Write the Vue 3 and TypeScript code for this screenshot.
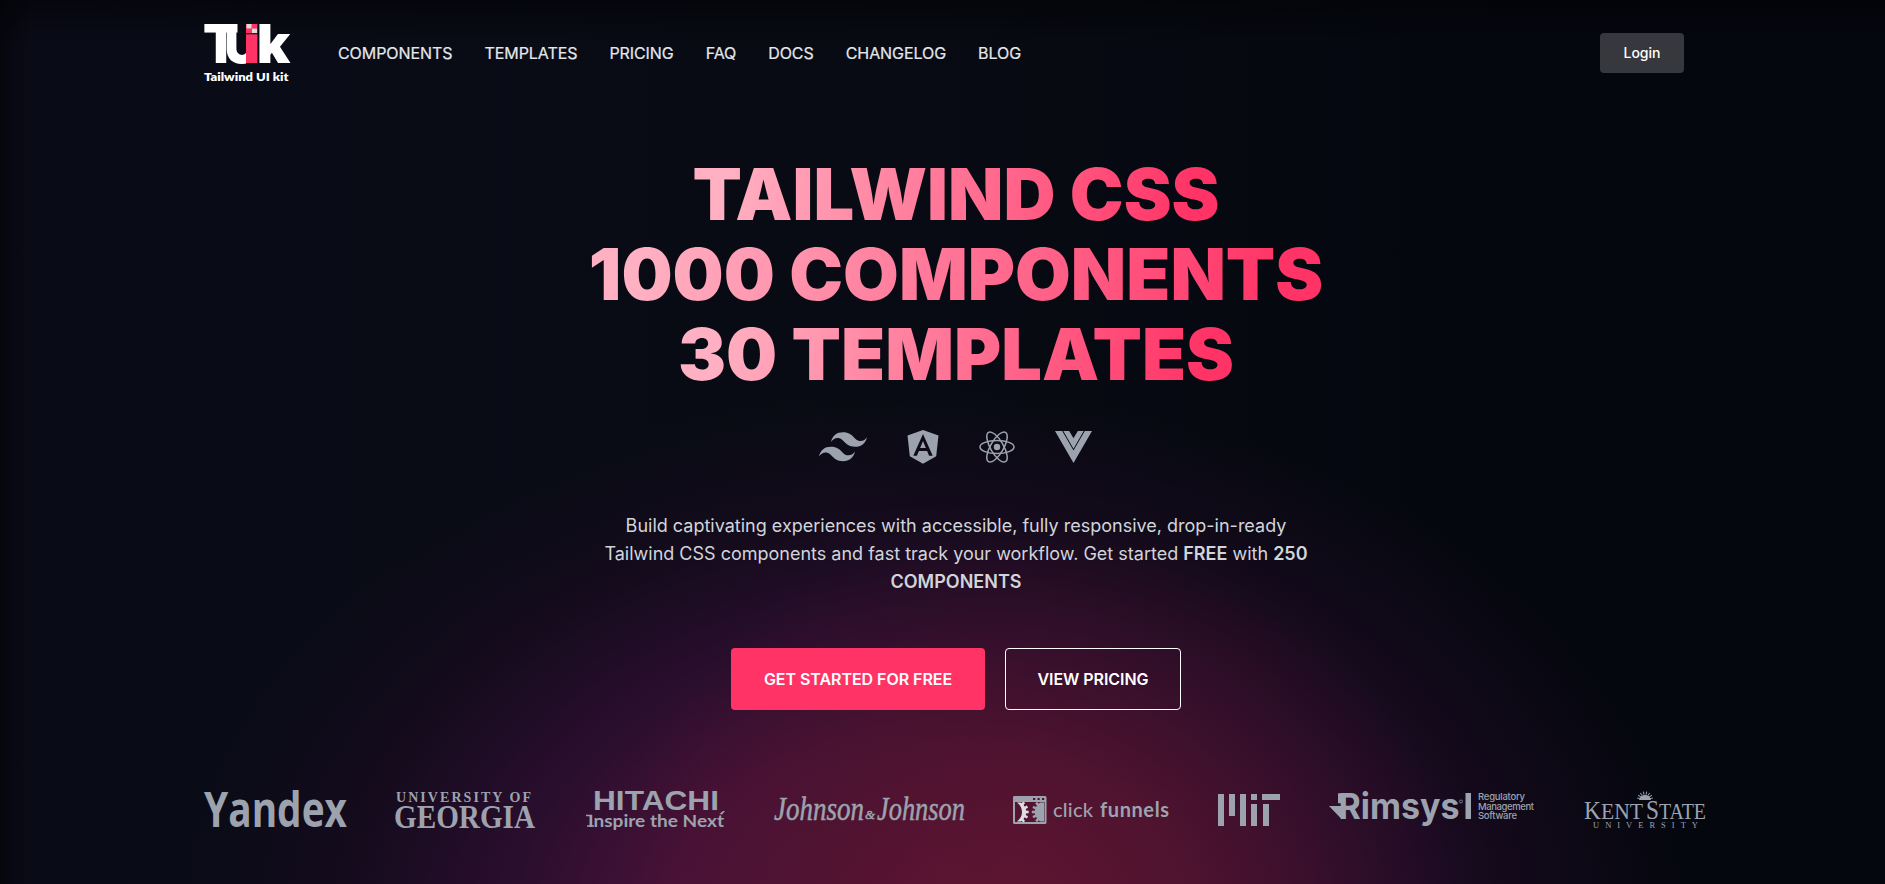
<script setup lang="ts">
const links: string[] = ['COMPONENTS', 'TEMPLATES', 'PRICING', 'FAQ', 'DOCS', 'CHANGELOG', 'BLOG']
const headline: string[] = ['TAILWIND CSS', '1000 COMPONENTS', '30 TEMPLATES']
const rays: number[] = [-80, -58, -36, -12, 12, 36, 58, 80]
const teeth: number[] = [-50, -25, 0, 25, 50]
</script>

<template>
  <div class="page">
    <header class="header">
      <svg class="logo" width="88" height="60" viewBox="0 0 88 60">
        <g class="mark" fill="#fff">
          <text x="-1" y="40" font-size="53.500" textLength="36" lengthAdjust="spacingAndGlyphs">T</text>
          <text x="20.500" y="39.500" font-size="53" textLength="35" lengthAdjust="spacingAndGlyphs">U</text>
          <text x="52.800" y="40" font-size="53.500" textLength="33.500" lengthAdjust="spacingAndGlyphs">k</text>
        </g>
        <rect x="33.800" y="0" width="8.200" height="27" fill="#080a14" />
        <rect x="42" y="0" width="13" height="41" fill="#080a14" />
        <rect x="42" y="11.300" width="11.400" height="28.700" fill="#ff3366" />
        <rect x="42" y="1" width="11.400" height="9.200" fill="#ff3366" />
        <rect x="42.500" y="1" width="5" height="4.400" fill="#ddd" />
        <rect x="48" y="5.600" width="5" height="4.400" fill="#ddd" />
        <text class="tag" x="0" y="57.500" font-size="12" fill="#fff" textLength="84.500" lengthAdjust="spacingAndGlyphs">Tailwind UI kit</text>
      </svg>
      <nav class="nav">
        <a v-for="link in links" :key="link">{{ link }}</a>
      </nav>
      <button class="login">Login</button>
    </header>

    <main class="hero">
      <h1>
        <span v-for="line in headline" :key="line" class="line">{{ line }}</span>
      </h1>

      <div class="tech">
        <svg width="48" height="30" viewBox="0 0 54 33" fill="#9ca3af">
          <path d="M27 0c-7.200 0-11.700 3.600-13.500 10.800 2.700-3.600 5.850-4.950 9.450-4.050 2.054.513 3.522 2.004 5.147 3.653C30.744 13.090 33.808 16.200 40.500 16.200c7.200 0 11.700-3.600 13.500-10.800-2.700 3.600-5.850 4.950-9.450 4.050-2.054-.513-3.522-2.004-5.147-3.653C36.756 3.110 33.692 0 27 0zM13.500 16.200C6.300 16.200 1.800 19.800 0 27c2.700-3.600 5.850-4.950 9.450-4.050 2.054.514 3.522 2.004 5.147 3.653C17.244 29.290 20.308 32.400 27 32.400c7.200 0 11.700-3.600 13.500-10.800-2.700 3.600-5.850 4.950-9.450 4.050-2.054-.513-3.522-2.004-5.147-3.653C23.256 19.310 20.192 16.200 13.500 16.200z" />
        </svg>
        <svg width="32" height="34" viewBox="0 0 32 34" fill="#9ca3af">
          <path fill-rule="evenodd" d="M16 0 31.500 5.500 29.200 26.300 16 33.700 2.800 26.300.5 5.500ZM16 4 6.300 25.800h3.600l2-4.900h8.200l2 4.900h3.600ZM16 10.900l2.900 7h-5.800Z" />
        </svg>
        <svg width="36" height="34" viewBox="0 0 36 34" fill="none" stroke="#9ca3af" stroke-width="1.500">
          <circle cx="18" cy="17" r="3.200" fill="#9ca3af" stroke="none" />
          <ellipse cx="18" cy="17" rx="17" ry="6.500" />
          <ellipse cx="18" cy="17" rx="17" ry="6.500" transform="rotate(60 18 17)" />
          <ellipse cx="18" cy="17" rx="17" ry="6.500" transform="rotate(120 18 17)" />
        </svg>
        <svg width="37" height="32" viewBox="0 0 37 32" fill="#9ca3af">
          <path d="M0 0H7.200L18.500 19.500 29.800 0H37L18.500 32Z" />
          <path d="M8.300 0H14.200L18.500 7.300 22.800 0H28.700L18.500 17.700Z" />
        </svg>
      </div>

      <p class="lead">
        Build captivating experiences with accessible, fully responsive, drop-in-ready Tailwind CSS components and fast
        track your workflow. Get started <b>FREE</b> with <b>250 COMPONENTS</b>
      </p>

      <div class="actions">
        <button class="btn primary">GET STARTED FOR FREE</button>
        <button class="btn outline">VIEW PRICING</button>
      </div>
    </main>

    <section class="brands">
      <svg width="142" height="44" viewBox="0 0 142 44">
        <text class="yandex" x="0" y="37" font-size="47.500" textLength="143" lengthAdjust="spacingAndGlyphs">Yandex</text>
      </svg>
      <svg width="143" height="44" viewBox="0 0 143 44">
        <text class="serif bold" x="2" y="11.500" font-size="14" textLength="135">UNIVERSITY OF</text>
        <text class="serif bold" x="0" y="38" font-size="33.500" textLength="141" lengthAdjust="spacingAndGlyphs">GEORGIA</text>
      </svg>
      <svg width="140" height="44" viewBox="0 0 140 44">
        <text class="sans bold" x="7" y="19.500" font-size="28" textLength="126" lengthAdjust="spacingAndGlyphs">HITACHI</text>
        <text class="lato bold" x="2" y="36.500" font-size="17" textLength="136" lengthAdjust="spacingAndGlyphs">Inspire the Next</text>
        <path d="M0 24.700h6v1.500H0zM1 35.300h7v1.400H1zM133.500 24l3.500-3h2l-3 3.500z" />
      </svg>
      <svg width="191" height="44" viewBox="0 0 191 44">
        <text class="script" x="0" y="30" font-size="34" textLength="90" lengthAdjust="spacingAndGlyphs">Johnson</text>
        <text class="script" x="91" y="29" font-size="13" textLength="10" lengthAdjust="spacingAndGlyphs">&amp;</text>
        <text class="script" x="103" y="30" font-size="34" textLength="88" lengthAdjust="spacingAndGlyphs">Johnson</text>
      </svg>
      <svg width="157" height="44" viewBox="0 0 157 44">
        <path fill-rule="evenodd" d="M1 6h31q1.500 0 1.500 1.500v25q0 1.500-1.500 1.500H1.500Q0 34 0 32.500V7.500Q0 6 1 6ZM2 12v20h29.500V12Z" />
        <path fill="#dcdde3" d="M4 12.500h4q4.500 3 5.500 9.500-1 6-5.500 9.500H4q5-4 5-9.500T4 12.500Z" />
        <path d="M31 12.500h-4q-4.500 3-5.500 9.500 1 6 5.500 9.500h4z" />
        <g fill="#dcdde3">
          <rect v-for="a in teeth" :key="a" x="12.500" y="20.700" width="3.200" height="2.600" :transform="`rotate(${a} 3 22)`" />
        </g>
        <rect v-for="a in teeth" :key="`r${a}`" x="18.800" y="20.700" width="3.500" height="2.600" :transform="`rotate(${a} 31 22)`" />
        <path fill="#4c1431" d="M20 8h2.200v2H20zM24.500 8h2.200v2h-2.200zM29 8h2.200v2H29z" />
        <text class="lato" x="40" y="26.500" font-size="20" font-weight="500" textLength="40">click</text>
        <text class="lato" x="87" y="26.500" font-size="20" font-weight="700" textLength="69">funnels</text>
      </svg>
      <svg width="62" height="44" viewBox="0 0 62 44">
        <path d="M0 4h6v32H0zM11 4h6v22h-6zM22 4h6v32h-6zM33 4h6v6h-6zM33 14h6v22h-6zM44 4h18v6H44zM45 14h6v22h-6z" />
      </svg>
      <svg width="207" height="44" viewBox="0 0 207 44">
        <path d="M0 16h13v13.500ZM9 3.300h7v5h-2.500v5H9Z" />
        <text class="rimsys" x="9.500" y="29" font-size="35.500" textLength="121" lengthAdjust="spacingAndGlyphs">Rimsys</text>
        <circle cx="132" cy="11.500" r="1.500" fill="none" stroke="#9ca3af" stroke-width=".7" />
        <rect x="136.500" y="3" width="5.500" height="26" />
        <text class="side" x="149" y="10" textLength="47">Regulatory</text>
        <text class="side" x="149" y="19.500" textLength="56">Management</text>
        <text class="side" x="149" y="29" textLength="39">Software</text>
      </svg>
      <svg width="122" height="44" viewBox="0 0 122 44">
        <path d="M55 10q1-5 6-5t6 5Z" />
        <path v-for="a in rays" :key="a" d="M61 3V0" stroke="#9ca3af" stroke-width="1" :transform="`translate(0 1.500) rotate(${a} 61 8)`" />
        <text class="serif" x="0" y="29" font-size="26" textLength="59" lengthAdjust="spacingAndGlyphs">K<tspan font-size="24">ENT</tspan></text>
        <text class="serif" x="62" y="29" font-size="28" textLength="60" lengthAdjust="spacingAndGlyphs">S<tspan font-size="24">TATE</tspan></text>
        <text class="serif" x="9" y="37.500" font-size="8.500" textLength="105">UNIVERSITY</text>
      </svg>
    </section>
  </div>
</template>

<style>
body {
  margin: 0;
  background: #05070e;
}
</style>

<style scoped>
.page {
  box-sizing: border-box;
  width: 1885px;
  height: 884px;
  padding: 0 177px 0 204px;
  overflow: hidden;
  font-family: Inter, sans-serif;
  background:
    linear-gradient(90deg, rgba(0, 0, 0, 0.45), transparent 34px),
    linear-gradient(180deg, rgba(0, 0, 0, 0.45), transparent 44px),
    radial-gradient(ellipse 420px 380px at 1030px 900px, rgba(105, 24, 38, 0.5), rgba(85, 20, 35, 0.36) 50%, transparent),
    radial-gradient(ellipse 760px 540px at 930px 930px, rgba(96, 20, 64, 0.9), rgba(84, 19, 64, 0.82) 35%, rgba(56, 15, 56, 0.72) 55%, rgba(28, 11, 34, 0.6) 77%, transparent),
    linear-gradient(90deg, #0a0b18, #080b13 45%, #05070f 80%);
}
.header {
  display: flex;
  align-items: center;
  height: 106px;
  padding-right: 24px;
}
.logo {
  overflow: visible;
}
.mark text {
  font-weight: 900;
}
.tag {
  font-family: Lato, sans-serif;
  font-weight: 800;
}
.nav {
  display: flex;
  flex: 1;
  gap: 32px;
  margin-left: 46px;
}
.nav a {
  font-size: 16px;
  line-height: 24px;
  letter-spacing: -0.07px;
  color: #e5e7eb;
  -webkit-text-stroke: 0.2px #e5e7eb;
}
.login {
  width: 84px;
  height: 40px;
  padding: 0;
  border: 0;
  border-radius: 4px;
  background: #37383e;
  color: #fff;
  font: 500 14px/20px Inter, sans-serif;
}
.hero {
  display: flex;
  flex-direction: column;
  align-items: center;
  height: 604px;
  padding-top: 48px;
  box-sizing: border-box;
}
h1 {
  display: flex;
  flex-direction: column;
  align-items: center;
  margin: 0;
  font-size: 72px;
  font-weight: 900;
  line-height: 80px;
}
.line {
  white-space: nowrap;
  color: transparent;
  background: linear-gradient(100deg, #ffb0c2 8%, #ff3366 94%);
  background-clip: text;
  -webkit-background-clip: text;
}
.tech {
  display: flex;
  align-items: center;
  gap: 40px;
  height: 34px;
  margin: 36px 2px 0 0;
}
.lead {
  width: 720px;
  margin: 48px 0 0;
  font-size: 18px;
  line-height: 28px;
  text-align: center;
  color: #d1d5db;
}
.lead b {
  font-weight: 600;
}
.actions {
  display: flex;
  gap: 20px;
  margin-top: 52px;
}
.btn {
  box-sizing: border-box;
  height: 62px;
  padding: 0;
  border-radius: 4px;
  font: 600 16px/24px Inter, sans-serif;
  letter-spacing: -0.05px;
  color: #fff;
}
.primary {
  width: 254px;
  border: 0;
  background: #ff3366;
}
.outline {
  width: 176px;
  border: 1px solid #fff;
  background: transparent;
}
.brands {
  display: flex;
  justify-content: space-between;
  width: 1502px;
  margin-top: 80px;
}
.brands svg {
  flex: none;
  overflow: visible;
  fill: #9ca3af;
}
.yandex {
  font-family: "Open Sans", sans-serif;
  font-weight: 700;
}
.serif {
  font-family: "Liberation Serif", serif;
}
.sans {
  font-family: "Liberation Sans", sans-serif;
}
.lato {
  font-family: Lato, sans-serif;
}
.bold {
  font-weight: 700;
}
.script {
  font-family: "Liberation Serif", serif;
  font-style: italic;
  font-weight: 400;
  stroke: #9ca3af;
  stroke-width: 0.5;
}
.rimsys {
  font-weight: 700;
}
.side {
  font-size: 9.5px;
  font-weight: 500;
}
</style>
